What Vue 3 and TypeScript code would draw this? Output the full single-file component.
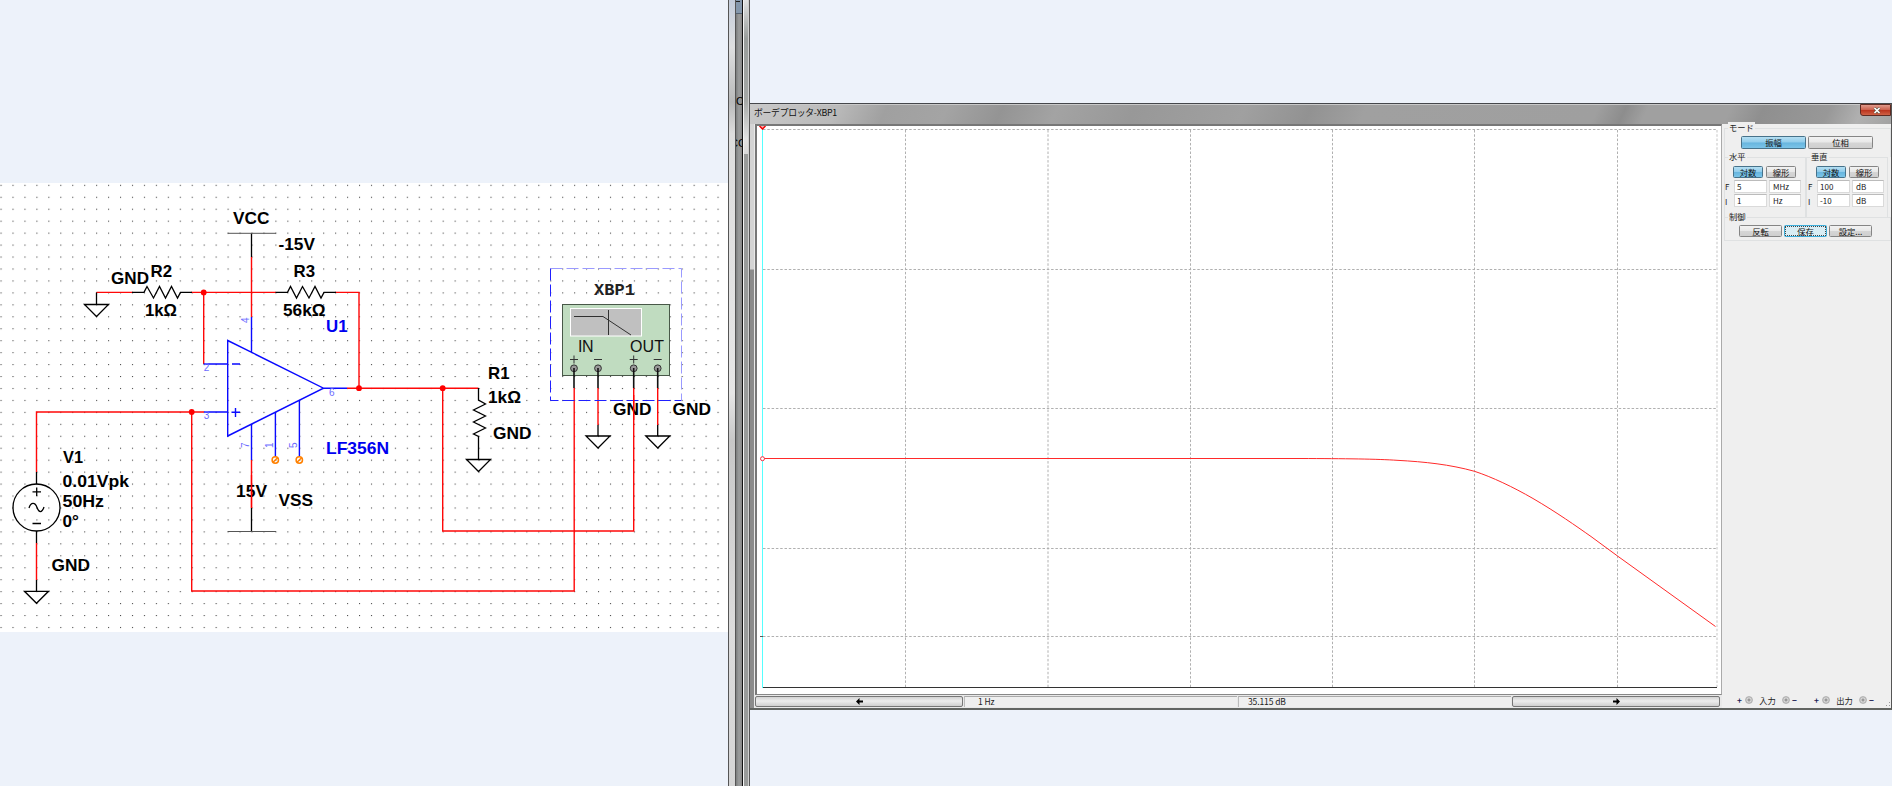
<script setup lang="ts">
interface Label { t: string; x: number; y: number; w: number; blue?: boolean }

const labels: Label[] = [
  { t: 'VCC', x: 233, y: 224.3, w: 36.5 },
  { t: '-15V', x: 278.5, y: 249.7, w: 36.5 },
  { t: 'GND', x: 111, y: 284.3, w: 38 },
  { t: 'R2', x: 150.5, y: 277.3, w: 21.5 },
  { t: 'R3', x: 293.5, y: 277.3, w: 21.5 },
  { t: '1kΩ', x: 145, y: 316, w: 32 },
  { t: '56kΩ', x: 283, y: 316, w: 42.5 },
  { t: 'U1', x: 326, y: 332, w: 21.5, blue: true },
  { t: 'V1', x: 63, y: 463.3, w: 20 },
  { t: '0.01Vpk', x: 62.5, y: 487.3, w: 66.5 },
  { t: '50Hz', x: 62.5, y: 507.3, w: 41.5 },
  { t: '0°', x: 62.5, y: 526.8, w: 16.5 },
  { t: 'GND', x: 51.5, y: 570.7, w: 38.5 },
  { t: '15V', x: 236, y: 496.7, w: 31 },
  { t: 'VSS', x: 278.5, y: 505.7, w: 34.5 },
  { t: 'LF356N', x: 326, y: 454, w: 63, blue: true },
  { t: 'R1', x: 488, y: 379.3, w: 21.5 },
  { t: '1kΩ', x: 488, y: 403.3, w: 33 },
  { t: 'GND', x: 493, y: 439.3, w: 38.5 },
  { t: 'GND', x: 613, y: 415.3, w: 38.5 },
  { t: 'GND', x: 672.5, y: 415.3, w: 38.5 },
]

const grounds = [[96.5, 304.5], [36.5, 591.3], [478.5, 459.5], [598, 436], [657.8, 436]]
const nodes = [[203.7, 292.4], [359, 388.2], [191.7, 412], [442.7, 388.2]]
const terminals = [574, 598, 633.7, 657.7]
const gridX = [905.5, 1048, 1190.5, 1332.5, 1474.5, 1617.5]
const gridY = [129.5, 269.5, 408.5, 548.5, 636.5]
const curve = 'M763 458.5H1300C1345 458.6 1378 459 1397 460.3C1425 461.8 1450 464.5 1474.5 471.3C1492 477 1513 487 1533 498.5C1557 512.5 1576 526 1591 536.5L1617.5 556L1715.5 626.5'

const axes = [
  { name: '水平', from: ['5', 'MHz'], to: ['1', 'Hz'] },
  { name: '垂直', from: ['100', 'dB'], to: ['-10', 'dB'] },
]
</script>

<template>
  <main class="screen">
    <section class="circuit">
      <svg width="728" height="786" viewBox="0 0 728 786">
        <defs>
          <pattern id="dots" x="0.5" y="184.8" width="11.95" height="11.95" patternUnits="userSpaceOnUse">
            <rect width="1.1" height="1.1" fill="#4c4c4c" />
          </pattern>
        </defs>
        <rect y="183" width="728" height="449" fill="#fff" />
        <rect y="184" width="724" height="446" fill="url(#dots)" />

        <g class="red">
          <path d="M96.5 292.4H133M191 292.4H276M335 292.4H359V388.2M203.7 292.4V364M251.5 257V317M347 388.2H478.5M36.5 472V412H204M191.7 412V591H574.2V388M442.7 388.2V531H633.7V388M598 388V425M657.7 388V425M251.5 460V508M36.5 543V580" />
        </g>
        <g class="ink">
          <path d="M251.5 257V233.3M96.5 304.5V292.4M132 292.4H144L147 286.5L153.5 298L159.5 286.5L165.5 298L171.5 286.5L177.5 298L180.5 292.4H192M275.5 292.4H287.5L290.5 286.5L296.5 298L302.5 286.5L309 298L315 286.5L321 298L324 292.4H336" />
          <path d="M478.5 388V400L485.5 404L473.5 410L485.5 416L473.5 422L485.5 428L473.5 434L478.5 436.5V459.5" />
          <path d="M251.5 508V531.3M36.5 472V484M36.5 531V543M36.5 580V591M598 425V436M657.7 425V436" />
          <path class="thin" d="M227.7 233.3H276M227.7 531.5H276" />
          <circle cx="36.5" cy="507.5" r="23.5" />
          <path d="M32.5 491.8H41M36.7 487.5V496M32.5 523.5H41M29 508C31 502 35 502 37 507.5S42 513 44 507" />
          <path v-for="g in grounds" :key="g[0]" :d="`M${g[0] - 12} ${g[1]}h24l-12 12z`" />
        </g>
        <g class="blue">
          <path d="M227.7 340.5V436L323.5 388.2ZM203.7 364H227.7M204 412H227.7M323.5 388.2H347M251.5 317V352.5M251.5 424V460M275.4 412V457M299.4 400V457M232 364H240M231.5 412.3H240M235.5 408V417" />
        </g>
        <g class="pins">
          <text x="203.7" y="371.3">2</text><text x="203.7" y="419.3">3</text><text x="329" y="395.5">6</text>
          <text transform="translate(249.3 323) rotate(-90)">4</text>
          <text transform="translate(249 448) rotate(-90)">7</text>
          <text transform="translate(273 448) rotate(-90)">1</text>
          <text transform="translate(297 448) rotate(-90)">5</text>
        </g>
        <g class="open">
          <circle cx="275.3" cy="460" r="3.2" /><circle cx="299.3" cy="460" r="3.2" />
          <path d="M273 462.3L277.6 457.7M297 462.3L301.6 457.7" />
        </g>
        <circle v-for="n in nodes" :key="n[0]" :cx="n[0]" :cy="n[1]" r="2.9" fill="#f00" />

        <path d="M550.5 268.5V400.5H681.5" class="select" />
        <path d="M550.5 268.5H681.5V400.5" class="select pale" />
        <rect x="562.5" y="304.5" width="107" height="71" fill="#c0dcc0" stroke="#485848" />
        <rect x="570.5" y="308.5" width="71" height="27.5" fill="#c0c0c0" stroke="#fff" />
        <path d="M574 316.5H603L631 335M608.5 310V335" stroke="#303030" fill="none" />
        <text class="device" x="594" y="294.7" textLength="41">XBP1</text>
        <text class="port" x="578" y="352" textLength="15.5">IN</text>
        <text class="port" x="630" y="352" textLength="34">OUT</text>
        <g v-for="(x, i) in terminals" :key="x">
          <path :d="`M${x - 4} 359.5h8${i % 2 ? '' : 'm-4 -4v8'}`" stroke="#333" fill="none" />
          <circle :cx="x" cy="368.3" r="3.4" fill="#999" stroke="#333" />
          <path :d="`M${x} 368V388`" stroke="#111" stroke-width="1.6" />
        </g>
        <text v-for="(l, i) in labels" :key="i" class="label" :class="{ accent: l.blue }" :x="l.x" :y="l.y" :textLength="l.w" lengthAdjust="spacingAndGlyphs">{{ l.t }}</text>
        <path d="M251.5 475V508M633.7 395V420" stroke="#f00" stroke-width="1.3" />
      </svg>
    </section>

    <aside class="edges">
      <svg width="22" height="786">
        <defs>
          <linearGradient id="frame" x1="0" x2="0" y1="0" y2="1">
            <stop offset="0" stop-color="#c4cddb" /><stop offset=".06" stop-color="#dedfe0" />
            <stop offset=".13" stop-color="#b9baba" /><stop offset=".17" stop-color="#dddddd" />
            <stop offset=".5" stop-color="#e6e6e6" /><stop offset=".56" stop-color="#c8c8c8" />
            <stop offset=".8" stop-color="#dcdcdc" /><stop offset="1" stop-color="#d5d5d5" />
          </linearGradient>
          <linearGradient id="rail" x1="0" x2="1" y1="0" y2="0">
            <stop offset="0" stop-color="#7b7d7d" /><stop offset=".5" stop-color="#9b9d9d" /><stop offset="1" stop-color="#858585" />
          </linearGradient>
          <linearGradient id="glass" x1="0" x2="0" y1="0" y2="1">
            <stop offset="0" stop-color="#e0e2e2" /><stop offset=".25" stop-color="#999d9b" />
            <stop offset=".65" stop-color="#a4a7a5" /><stop offset=".9" stop-color="#e2e2e2" /><stop offset="1" stop-color="#d8d8d8" />
          </linearGradient>
        </defs>
        <rect width="22" height="786" fill="#555" />
        <rect x="1" width="6" height="786" fill="url(#frame)" />
        <rect x="8" width="6" height="786" fill="url(#rail)" />
        <rect x="8" width="6" height="13" fill="#8497ab" />
        <path d="M8 1.5H12" stroke="#222" /><path d="M8 13.5H14" stroke="#536171" />
        <rect x="14" width="1" height="786" fill="#111" />
        <rect x="15" width="1" height="786" fill="#f4f4f4" />
        <rect x="16" width="4" height="154" fill="url(#glass)" />
        <rect x="16" y="154" width="4" height="632" fill="#999b9a" />
        <rect x="20" width="1" height="786" fill="#cfcfcf" />
        <g class="fragments">
          <svg x="8" width="6" height="160"><text x="0" y="105">C</text><text x="-6" y="147">CC</text></svg>
        </g>
      </svg>
    </aside>

    <section class="window">
      <header class="titlebar">
        <h1>ボーデプロッタ-XBP1</h1>
        <button class="close"><svg width="8" height="7" viewBox="0 0 8 7"><path d="M1.5 1L6.5 6M6.5 1L1.5 6" stroke="#554" stroke-width="2.8" /><path d="M1.5 1L6.5 6M6.5 1L1.5 6" stroke="#fff" stroke-width="1.7" /></svg></button>
      </header>
      <div class="content">
        <div class="graph">
          <div class="plot">
            <svg width="964" height="568" viewBox="757 126 964 568">
              <path v-for="y in gridY" :key="y" :d="`M763 ${y}H1716`" class="grid" />
              <path v-for="x in gridX" :key="x" :d="`M${x} 130V687`" class="grid" />
              <path d="M1717 130V687" class="grid last" />
              <path d="M762.5 687.5H1717" stroke="#333" />
              <path d="M762.5 126V688" stroke="#5ff" />
              <path d="M759.5 126l3 3l3 -3" fill="#faa" stroke="#e00" stroke-width="1.4" />
              <path d="M760 636.5H763" stroke="#555" />
              <path :d="curve" fill="none" stroke="#ff2a2a" stroke-width="1" />
              <circle cx="762.5" cy="458.7" r="2" fill="#fff" stroke="#e34" />
            </svg>
          </div>
          <footer class="readout">
            <button class="step"><svg width="7" height="7"><path d="M0 3.5L3.5 0V2.5H7V4.5H3.5V7Z" /></svg></button>
            <output class="freq">1 Hz</output>
            <output class="gain">35.115 dB</output>
            <button class="step right"><svg width="7" height="7"><path d="M7 3.5L3.5 0V2.5H0V4.5H3.5V7Z" /></svg></button>
          </footer>
        </div>
        <aside class="panel">
          <fieldset class="mode"><legend>モード</legend><button class="on">振幅</button><button>位相</button></fieldset>
          <div class="axes">
            <fieldset v-for="a in axes" :key="a.name" class="axis">
              <legend>{{ a.name }}</legend>
              <div class="scale"><button class="on">対数</button><button>線形</button></div>
              <div class="range"><label>F</label><span>{{ a.from[0] }}</span><span class="unit">{{ a.from[1] }}</span></div>
              <div class="range"><label class="low">I</label><span>{{ a.to[0] }}</span><span class="unit">{{ a.to[1] }}</span></div>
            </fieldset>
          </div>
          <fieldset class="control"><legend>制御</legend><button>反転</button><button class="focus">保存</button><button>設定...</button></fieldset>
          <div class="jacks">
            <div v-for="n in ['入力', '出力']" :key="n" class="jack">
              <b>+</b><i></i><span>{{ n }}</span><i></i><b>−</b>
            </div>
            <svg class="grip" width="8" height="8"><path d="M6 0h1v1h-1zM3 3h1v1h-1zM6 3h1v1h-1zM0 6h1v1h-1zM3 6h1v1h-1zM6 6h1v1h-1z" fill="#999" /></svg>
          </div>
        </aside>
      </div>
    </section>
  </main>
</template>

<style>
body { margin: 0; overflow: hidden; }
</style>

<style scoped>
* { box-sizing: border-box; }
svg { display: block; }
.screen { display: flex; width: 1892px; height: 786px; background: #edf2fa; font-family: "Noto Sans CJK JP", sans-serif; }
.circuit { width: 728px; flex: none; }
.edges { width: 22px; flex: none; }
.red path { stroke: #ff0808; stroke-width: 1.4; fill: none; }
.ink path, .ink circle { stroke: #000; stroke-width: 1.3; fill: none; }
.ink .thin { stroke: #555; stroke-width: 1; }
.blue path { stroke: #0a0aff; stroke-width: 1.4; fill: none; }
.pins text { font: 10px "Liberation Sans", sans-serif; fill: #6c6cff; }
.open circle, .open path { stroke: #ff8000; stroke-width: 1.5; fill: none; }
.select { fill: none; stroke: #2020ff; stroke-dasharray: 12 4; }
.select.pale { stroke: #9a9aff; }
.label { font: bold 16.6px "Liberation Sans", Arial, sans-serif; fill: #000; }
.label.accent { fill: #0000f0; }
.device { font: bold 17px "Liberation Mono", monospace; fill: #222; }
.port { font: 16px "Liberation Sans", sans-serif; fill: #111; }
.fragments text { font: 11px "Liberation Sans", sans-serif; }

.window { width: 1142px; height: 607px; margin-top: 103px; border-top: 1px solid #45474b; border-right: 1px solid #555; border-bottom: 2px solid #626562; display: flex; flex-direction: column; background: #efefef; }
.titlebar { height: 20px; flex: none; display: flex; justify-content: space-between; padding-left: 4px; border-top: 1px solid #c9c9c9; background: linear-gradient(115deg, #c9c9c9 0, #bababa 80px, #a0a0a0 125px, #a4a4a4 180px, #949494 230px, #a3a3a3 280px, #989898 350px, #a0a0a0 450px, #929292 510px, #a0a0a0 560px, #9f9f9f 770px, #8d8d8d 795px, #a0a0a0 815px, #a0a0a0 890px, #8f8f8f 920px, #989898 980px, #b0b0b0 1010px, #929292 1080px, #7c7c7c 1141px); }
h1 { margin: 0; font: 8.8px/16px "Noto Sans CJK JP", sans-serif; color: #111; letter-spacing: -.25px; }
.close { width: 31px; height: 12px; margin-top: -1px; padding: 0 0 0 3px; display: grid; place-items: center; border: 1px solid #602b22; border-radius: 0 0 0 3px; background: linear-gradient(#df9a8c, #ce6552 45%, #ba321c 50%, #cf6146); }
.content { display: flex; flex: 1; min-height: 0; }
.graph { width: 972px; display: flex; flex-direction: column; padding-left: 5px; background: linear-gradient(#d4d4d4 0 145px, #8b8b8b 146px) 0 0 / 4px 100% no-repeat #e9e9e9; }
.plot { height: 571px; flex: none; border: 2px solid #777; border-right: 1px solid #aaa; border-bottom: 1px solid #888; background: #fff; overflow: hidden; }
.plot svg { width: 964px; height: 568px; }
.grid { stroke: #b0b0b0; stroke-width: 1; stroke-dasharray: 2.5 1.8; fill: none; }
.grid.last { stroke: #e2e2e2; stroke-width: 2; }
.readout { display: flex; flex: 1; padding-top: 1px; gap: 1px; font-size: 8.5px; line-height: 9px; letter-spacing: -.1px; color: #222; }
.readout output { width: 273px; height: 11px; border-top: 1px solid #aaa; border-left: 1px solid #bbb; background: #efefef; padding-left: 13px; }
.readout output.gain { padding-left: 9px; }
.step { width: 208px; height: 11px; display: grid; place-items: center; padding: 0; border: 1px solid #777; border-radius: 2px; background: linear-gradient(#d3d3d3, #ededed 45%, #cfcfcf); }
.panel { flex: 1; display: flex; flex-direction: column; padding: 4px 3px 0 2px; font-size: 8.3px; line-height: 10px; color: #222; }
fieldset { position: relative; margin: 0; min-width: 0; border: 1px solid #dfe1e2; border-bottom: 0; padding: 0; display: flex; }
legend { position: absolute; top: -7px; left: 3px; padding: 0 1px; background: #efefef; }
.panel button { font: inherit; color: #111; padding: 0; text-align: center; line-height: 9px; border: 1px solid #858585; border-radius: 1.5px; background: linear-gradient(#f2f2f2, #e8e8e8 48%, #d5d5d5 52%, #cfcfcf); }
.panel button.on { border-color: #47728a; background: linear-gradient(#b4dff3, #91cceb 48%, #67b5de 52%, #7bc4e8); }
.mode { height: 29px; padding: 7px 0 0 16px; gap: 2px; }
.mode button { width: 65px; height: 13px; }
.axes { display: flex; height: 60px; }
.axis { width: 82px; flex-direction: column; }
.axis + .axis { border-left: 1px solid #dfe1e2; }
.scale { display: flex; gap: 3px; padding: 8px 0 0 8px; margin-bottom: 2px; }
.axis + .axis .scale { padding-left: 9px; }
.scale button { width: 30px; height: 12px; }
.range { display: flex; gap: 2px; height: 12px; margin-bottom: 2px; }
.range label { width: 7px; line-height: 14px; font-size: 8px; }
.axis + .axis .range label { width: 8px; padding-left: 1px; }
.range .low { padding-top: 1px; }
.range span { width: 33px; height: 13px; background: #fff; border: 1px solid #dadada; border-top-color: #bbb; padding-left: 2px; font-size: 8px; line-height: 11px; }
.range .unit { width: 32px; padding-left: 3px; }
.control { height: 24px; padding: 7px 0 0 14px; gap: 2px; border-bottom: 1px solid #dfe1e2; }
.control button { width: 43px; height: 12px; }
.panel button.focus { border-color: #3caedb; outline: 1px dotted #444; outline-offset: -2px; background: #d9edf4; }
.jacks { margin-top: auto; height: 14px; display: flex; position: relative; padding-left: 13px; }
.jack { display: flex; align-items: center; gap: 2px; width: 77px; height: 12px; }
.jack b { width: 6px; font-weight: 700; color: #225; }
.jack i { width: 8px; height: 8px; border: 1px solid #b4b4b4; border-radius: 50%; background: radial-gradient(#999 0 1px, #ddd 2px, #bbb 3px); }
.jack span { width: 25px; text-align: center; }
.grip { position: absolute; right: -3px; bottom: 1px; }
</style>
